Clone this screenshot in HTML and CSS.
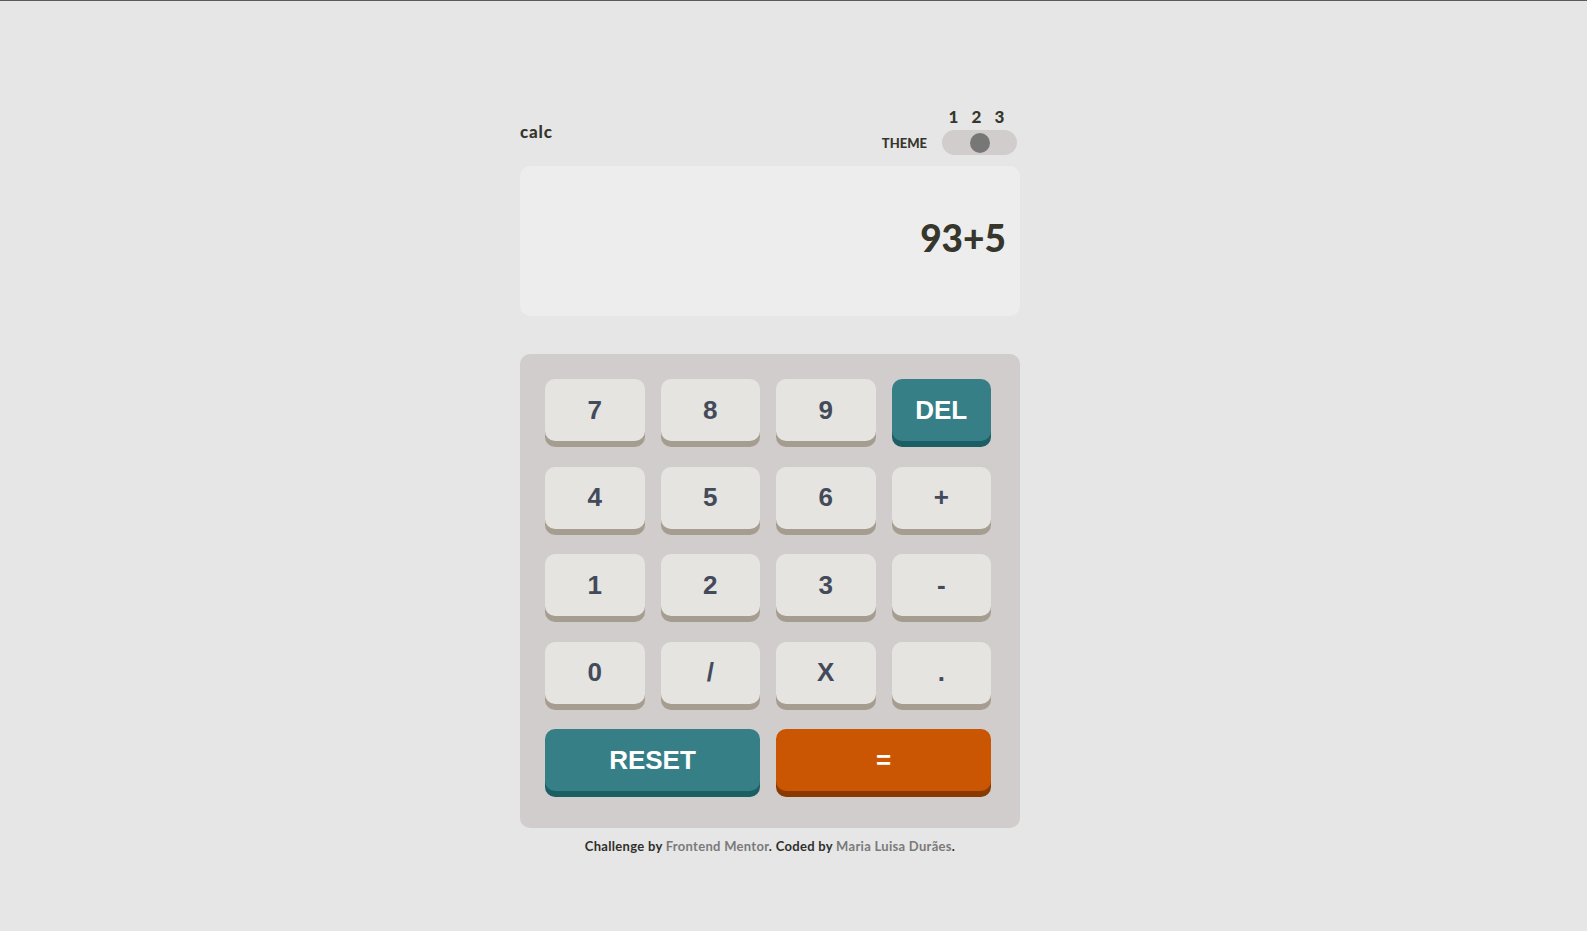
FILE: index.html
```html
<!DOCTYPE html>
<html lang="en">
<head>
<meta charset="utf-8">
<title>Calculator app</title>
<link rel="stylesheet" href="styles.css">
</head>
<body>
<main class="page">
  <div class="calc">
    <header class="top">
      <h1 class="logo">calc</h1>
      <div class="theme">
        <span class="theme-label">THEME</span>
        <div class="theme-switch">
          <div class="nums"><span>1</span><span>2</span><span>3</span></div>
          <div class="track"><span class="knob"></span></div>
        </div>
      </div>
    </header>

    <section class="screen"><span class="screen-value">93+5</span></section>

    <section class="keypad">
      <button class="key">7</button>
      <button class="key">8</button>
      <button class="key">9</button>
      <button class="key key-accent">DEL</button>
      <button class="key">4</button>
      <button class="key">5</button>
      <button class="key">6</button>
      <button class="key">+</button>
      <button class="key">1</button>
      <button class="key">2</button>
      <button class="key">3</button>
      <button class="key">-</button>
      <button class="key">0</button>
      <button class="key">/</button>
      <button class="key">X</button>
      <button class="key">.</button>
      <button class="key key-accent key-wide">RESET</button>
      <button class="key key-equal key-wide">=</button>
    </section>

    <footer class="attribution">
      Challenge by <a href="#">Frontend Mentor</a>. Coded by <a href="#">Maria Luisa Durães</a>.
    </footer>
  </div>
</main>
</body>
</html>
```

FILE: styles.css
```css
* {
  box-sizing: border-box;
}

html, body {
  margin: 0;
  padding: 0;
}

body {
  background: #e6e6e6;
  border-top: 1px solid #5b5b5b;
  font-family: "Lato", "Open Sans", sans-serif;
  color: #36362c;
  min-height: 931px;
}

.page {
  display: flex;
  justify-content: center;
  padding-right: 47px;
}

.calc {
  width: 500px;
  padding-top: 108px;
}

/* header */
.top {
  display: flex;
  justify-content: space-between;
  align-items: flex-end;
  padding-right: 3px;
}

.logo {
  margin: 0 0 15px 0;
  font-size: 17px;
  line-height: 16px;
  font-weight: 900;
  letter-spacing: 0.8px;
  color: #36362c;
}

.theme {
  display: flex;
  align-items: flex-end;
  gap: 15px;
}

.theme-label {
  font-size: 13px;
  line-height: 13px;
  font-weight: 900;
  margin-bottom: 5px;
  color: #36362c;
}

.theme-switch {
  display: flex;
  flex-direction: column;
  width: 75px;
}

.nums {
  display: grid;
  grid-template-columns: repeat(3, 23px);
  justify-items: center;
  font-size: 17px;
  line-height: 16px;
  font-weight: 900;
  margin-bottom: 5px;
  color: #36362c;
}

.track {
  height: 25px;
  border-radius: 13px;
  background: #d2cdcd;
  display: flex;
  align-items: center;
  justify-content: center;
}

.knob {
  width: 20px;
  height: 20px;
  border-radius: 50%;
  background: #777777;
}

/* screen */
.screen {
  margin-top: 11px;
  height: 150px;
  border-radius: 10px;
  background: #ededed;
  display: flex;
  align-items: center;
  justify-content: flex-end;
  padding: 0 14px 8px 14px;
}

.screen-value {
  font-size: 37px;
  line-height: 37px;
  font-weight: 900;
  color: #36362c;
}

/* keypad */
.keypad {
  margin-top: 38px;
  background: #d2cdcd;
  border-radius: 10px;
  padding: 25px 29px 37px 25px;
  display: grid;
  grid-template-columns: repeat(4, 1fr);
  column-gap: 16px;
  row-gap: 25.5px;
}

.key {
  height: 62px;
  border: none;
  border-radius: 10px;
  background: #e5e4e1;
  box-shadow: 0 6px 0 #a69d91;
  font-family: "Liberation Sans", Arial, sans-serif;
  font-weight: 700;
  font-size: 26px;
  color: #434a59;
  padding: 0;
  cursor: pointer;
}

.key-accent {
  background: #377f86;
  box-shadow: 0 6px 0 #1b5f65;
  color: #ffffff;
}

.key-equal {
  background: #ca5502;
  box-shadow: 0 6px 0 #893a01;
  color: #ffffff;
}

.key-wide {
  grid-column: span 2;
}

/* footer */
.attribution {
  margin-top: 11px;
  text-align: center;
  font-size: 13px;
  line-height: 15px;
  font-weight: 700;
  letter-spacing: 0.3px;
  color: #2f2f2a;
}

.attribution a {
  color: #7a7a7a;
  text-decoration: none;
}
```
